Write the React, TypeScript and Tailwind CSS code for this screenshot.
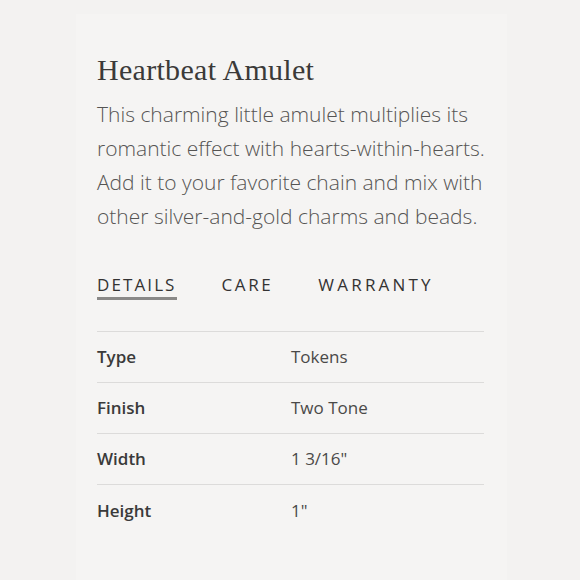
import React from "react";

const rows = [
  ["Type", "Tokens"],
  ["Finish", "Two Tone"],
  ["Width", '1 3/16"'],
  ["Height", '1"'],
];

export default function App() {
  return (
    <div className="w-[580px] h-[580px] bg-[#f3f2f1] overflow-hidden">
      <div className="ml-[76px] mt-[14px] w-[431px] h-[566px] bg-[#f5f4f3] pl-[21px] pt-[38px]">
        <h1 className="text-[30px] leading-[36px] text-[#3b3a39] tracking-[0.3px]" style={{ fontFamily: '"Liberation Serif", serif' }}>
          Heartbeat Amulet
        </h1>
        <p className="mt-[9px] w-[410px] text-[21px] leading-[34px] font-light text-[#555453]" style={{ fontFamily: '"Open Sans", sans-serif' }}>
          This charming little amulet multiplies its romantic effect with hearts-within-hearts. Add it to your favorite chain and mix with other silver-and-gold charms and beads.
        </p>
        <div className="mt-[41px] flex gap-[45px] text-[17px] leading-[22px] font-medium tracking-[2.1px] text-[#333232]" style={{ fontFamily: '"Open Sans", sans-serif' }}>
          <div className="pb-[1px] border-b-[3px] border-[#8a8988]">DETAILS</div>
          <div className="tracking-[2.6px]">CARE</div>
          <div className="tracking-[3.2px]">WARRANTY</div>
        </div>
        <div className="mt-[31px] w-[387px] border-t border-[#dcdbda]" style={{ fontFamily: '"Open Sans", sans-serif' }}>
          {rows.map(([k, v], i) => (
            <div key={k} className={`flex h-[51px] items-center text-[17px] ${i < rows.length - 1 ? "border-b border-[#dcdbda]" : ""}`}>
              <div className="w-[194px] font-semibold text-[#3a3a3a]">{k}</div>
              <div className="text-[#4a4948]">{v}</div>
            </div>
          ))}
        </div>
      </div>
    </div>
  );
}
